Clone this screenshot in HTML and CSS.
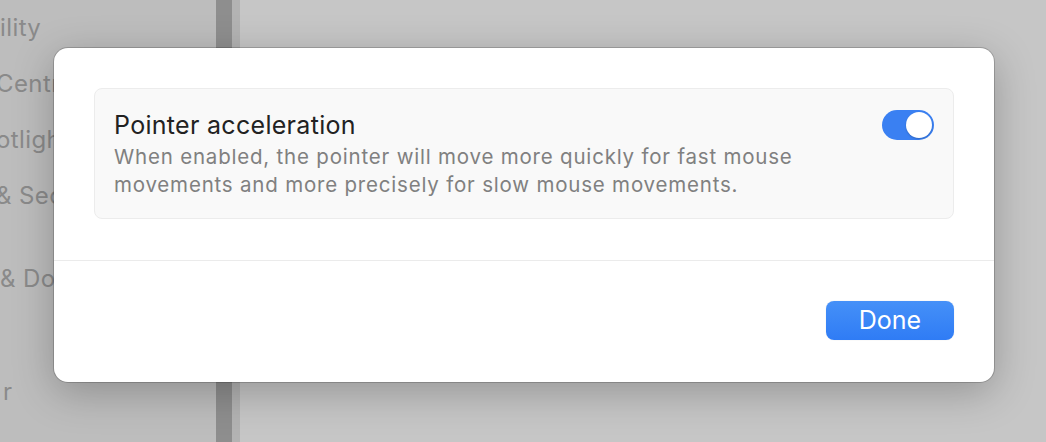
FILE: index.html
```html
<!DOCTYPE html>
<html lang="en">
<head>
    <meta charset="UTF-8">
    <title>Pointer acceleration</title>
    <link rel="stylesheet" href="styles.css">
</head>
<body>
    <div class="window">
        <div class="sidebar">
            <div class="side-item">ility</div>
            <div class="side-item cut">Centr</div>
            <div class="side-item cut">otligh</div>
            <div class="side-item cut">&amp; Sec</div>
            <div class="side-gap"></div>
            <div class="side-item">&amp; Do</div>
            <div class="side-gap big"></div>
            <div class="side-item short">r</div>
        </div>
        <div class="divider-dark"></div>
        <div class="divider-light"></div>
        <div class="content"></div>
    </div>

    <div class="overlay">
        <div class="sheet">
            <div class="sheet-body">
                <div class="card">
                    <div class="card-text">
                        <div class="card-title">Pointer acceleration</div>
                        <div class="card-desc">When enabled, the pointer will move more quickly for fast mouse movements and more precisely for slow mouse movements.</div>
                    </div>
                    <div class="toggle on"><div class="knob"></div></div>
                </div>
            </div>
            <div class="sheet-footer">
                <button class="done">Done</button>
            </div>
        </div>
    </div>
</body>
</html>
```

FILE: styles.css
```css
html, body {
    margin: 0;
    height: 100%;
}
body {
    font-family: Inter, "Noto Sans", sans-serif;
    background: #c6c6c6;
    overflow: hidden;
    position: relative;
}
.window {
    display: flex;
    height: 100%;
}
.sidebar {
    width: 216px;
    background: #bdbdbd;
    color: #8a8a8a;
    font-size: 24px;
    letter-spacing: 0.4px;
    padding-top: 13px;
    box-sizing: border-box;
    overflow: hidden;
}
.side-item {
    height: 56px;
    line-height: 30px;
    white-space: nowrap;
}
.side-item.cut {
    margin-left: -4px;
}
.side-item.short {
    padding-left: 3px;
}
.side-gap {
    height: 27px;
}
.side-gap.big {
    height: 57px;
}
.divider-dark {
    width: 16px;
    background: #8e8e8e;
}
.divider-light {
    width: 8px;
    background: #b3b3b3;
}
.content {
    flex: 1;
    background: #c6c6c6;
}

.overlay {
    position: absolute;
    inset: 0;
}
.sheet {
    position: absolute;
    left: 54px;
    top: 48px;
    width: 940px;
    height: 334px;
    background: #fff;
    border-radius: 14px;
    box-shadow: 0 0 0 1px rgba(0, 0, 0, 0.18), 0 10px 40px rgba(0, 0, 0, 0.25);
    display: flex;
    flex-direction: column;
}
.sheet-body {
    padding: 40px 40px 0 40px;
    height: 213px;
    box-sizing: border-box;
    border-bottom: 1px solid #ebebeb;
}
.card {
    display: flex;
    justify-content: space-between;
    align-items: flex-start;
    background: #f9f9f9;
    border: 1px solid #ececec;
    border-radius: 8px;
    padding: 20px 19px 0 19px;
    height: 131px;
    box-sizing: border-box;
}
.card-title {
    font-size: 25px;
    letter-spacing: 0.3px;
    color: #222;
    line-height: 32px;
}
.card-desc {
    font-size: 20.5px;
    letter-spacing: 0.8px;
    color: #808080;
    line-height: 28px;
    width: 720px;
    margin-top: 2px;
}
.toggle {
    width: 52px;
    height: 30px;
    border-radius: 15px;
    background: #3a80f2;
    position: relative;
    margin-top: 1px;
    flex-shrink: 0;
}
.knob {
    position: absolute;
    right: 2px;
    top: 2px;
    width: 26px;
    height: 26px;
    border-radius: 50%;
    background: #fff;
    box-shadow: 0 1px 2px rgba(0, 0, 0, 0.2);
}
.sheet-footer {
    flex: 1;
    display: flex;
    justify-content: flex-end;
    align-items: flex-start;
    padding: 40px 40px 0 0;
}
.done {
    width: 128px;
    height: 39px;
    border: none;
    border-radius: 8px;
    background: linear-gradient(#4590f8, #2f7cf5);
    color: #fff;
    font-family: Inter, "Noto Sans", sans-serif;
    font-size: 25px;
    line-height: 39px;
    padding: 0;
    box-shadow: 0 0 1px rgba(0, 0, 0, 0.2);
}
```
